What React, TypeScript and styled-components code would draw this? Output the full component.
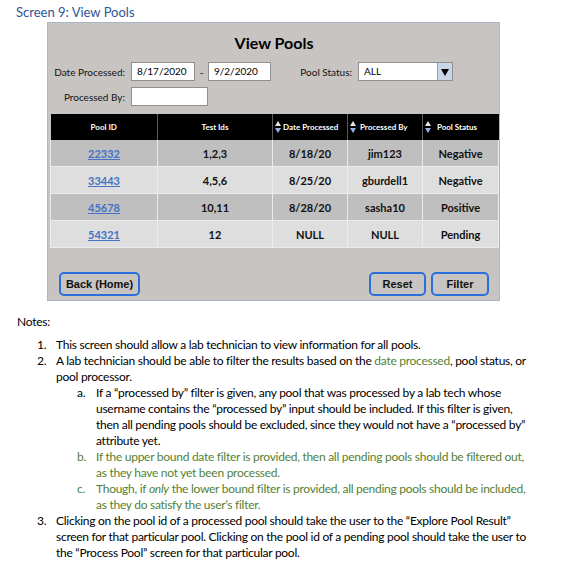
import React from "react";
import styled, { createGlobalStyle } from "styled-components";

const Global = createGlobalStyle`
  html, body { margin: 0; padding: 0; background: #ffffff; }
  body { font-family: Lato, "Noto Sans", sans-serif; color: #000; }
`;

const Page = styled.div`
  width: 578px;
  height: 583px;
  overflow: hidden;
  padding-top: 4px;
  box-sizing: border-box;
`;

const Heading = styled.h2`
  margin: 0 0 2px 16px;
  font-family: Lato, "Noto Sans", sans-serif;
  font-weight: 400;
  font-size: 13px;
  line-height: 16px;
  color: #2f5496;
`;

const Panel = styled.div`
  margin-left: 47px;
  width: 453px;
  height: 279px;
  box-sizing: border-box;
  background: #c8c4c2;
  border: 1px solid #a9b6ca;
  display: flex;
  flex-direction: column;
  padding: 10px 1px 0 2px;
  font-family: Lato, "Noto Sans", sans-serif;
`;

const PanelTitle = styled.div`
  text-align: center;
  font-weight: 700;
  font-size: 16px;
  line-height: 20px;
  height: 29px;
`;

const FormRow = styled.div<{ $top: number }>`
  display: flex;
  align-items: center;
  height: 19px;
  margin-top: ${(p) => p.$top}px;
`;

const Label = styled.span<{ $w: number }>`
  width: ${(p) => p.$w}px;
  text-align: right;
  font-size: 10px;
  color: #111;
  padding-right: 6px;
  box-sizing: border-box;
  flex: none;
`;

const Field = styled.div<{ $w: number }>`
  width: ${(p) => p.$w}px;
  height: 19px;
  box-sizing: border-box;
  background: #fff;
  border: 1px solid #8f8f8f;
  font-size: 10px;
  line-height: 17px;
  padding-left: 5px;
  flex: none;
  display: flex;
  justify-content: space-between;
`;

const Dash = styled.span`
  width: 13px;
  text-align: center;
  font-size: 10px;
  flex: none;
`;

const Arrow = styled.span`
  width: 14px;
  height: 17px;
  background: #c9d6e6;
  border-left: 1px solid #8da0ba;
  display: flex;
  align-items: center;
  justify-content: center;
`;

const Table = styled.table`
  margin-top: 8px;
  width: 448px;
  border-collapse: collapse;
  table-layout: fixed;
  font-family: Lato, "Noto Sans", sans-serif;
`;

const HeadCell = styled.th`
  height: 26px;
  padding: 0;
  background: #000;
  color: #fff;
  font-size: 8px;
  font-weight: 700;
  border-left: 1px solid #5a5a5a;
  text-align: center;
  white-space: nowrap;
  &:first-child { border-left: none; }
`;

const SortHead = styled.span`
  display: flex;
  align-items: center;
  gap: 2px;
  padding-left: 2px;
`;

const Row = styled.tr<{ $dark: boolean }>`
  background: ${(p) => (p.$dark ? "#bfbfbf" : "#dedede")};
`;

const Cell = styled.td`
  height: 26px;
  padding: 0;
  text-align: center;
  font-size: 11px;
  font-weight: 700;
  color: #111;
  border: 1px solid #ebebeb;
  border-top: none;
`;

const PoolLink = styled.a`
  color: #4472c4;
  text-decoration: underline;
  font-weight: 700;
`;

const ButtonRow = styled.div`
  margin-top: 24px;
  display: flex;
  align-items: center;
  padding: 0 9px 0 9px;
  gap: 5px;
`;

const Btn = styled.button<{ $w: number }>`
  width: ${(p) => p.$w}px;
  height: 24px;
  box-sizing: border-box;
  border: 2px solid #2a6fdb;
  border-radius: 5px;
  background: #c8c4c2;
  font-family: "Liberation Sans", Arial, sans-serif;
  font-weight: 700;
  font-size: 11px;
  color: #111;
  padding: 0;
`;

const Spacer = styled.div`
  flex: 1;
`;

const Notes = styled.div`
  margin-top: 13px;
  font-size: 12px;
  letter-spacing: -0.27px;
  line-height: 16px;
  font-family: Lato, "Noto Sans", sans-serif;
`;

const NotesLabel = styled.div`
  padding-left: 17px;
  margin-bottom: 7px;
`;

const List = styled.div<{ $indent: number }>`
  padding-left: ${(p) => p.$indent}px;
`;

const Item = styled.div<{ $green?: boolean; $mark: number }>`
  display: grid;
  grid-template-columns: ${(p) => p.$mark}px 1fr;
  color: ${(p) => (p.$green ? "#538135" : "#000")};
  white-space: nowrap;
`;

const Green = styled.span`
  color: #538135;
`;

const SortIcon = () => (
  <svg width="6" height="14" viewBox="0 0 6 14">
    <polygon points="3,1 6,6 0,6" fill="#e6e6e6" />
    <polygon points="0,8 6,8 3,13" fill="#8fb4e3" />
  </svg>
);

const rows = [
  { id: "22332", tests: "1,2,3", date: "8/18/20", by: "jim123", status: "Negative" },
  { id: "33443", tests: "4,5,6", date: "8/25/20", by: "gburdell1", status: "Negative" },
  { id: "45678", tests: "10,11", date: "8/28/20", by: "sasha10", status: "Positive" },
  { id: "54321", tests: "12", date: "NULL", by: "NULL", status: "Pending" },
];

export default function App() {
  return (
    <Page>
      <Global />
      <Heading>Screen 9: View Pools</Heading>
      <Panel>
        <PanelTitle>View Pools</PanelTitle>
        <FormRow $top={0}>
          <Label $w={81}>Date Processed:</Label>
          <Field $w={64}>8/17/2020</Field>
          <Dash>-</Dash>
          <Field $w={63}>9/2/2020</Field>
          <Label $w={87}>Pool Status:</Label>
          <Field $w={95}>
            ALL
            <Arrow>
              <svg width="8" height="8" viewBox="0 0 8 8">
                <polygon points="0,1 8,1 4,8" fill="#000" />
              </svg>
            </Arrow>
          </Field>
        </FormRow>
        <FormRow $top={6}>
          <Label $w={81}>Processed By:</Label>
          <Field $w={77} />
        </FormRow>
        <Table>
          <colgroup>
            <col style={{ width: 107 }} />
            <col style={{ width: 115 }} />
            <col style={{ width: 75 }} />
            <col style={{ width: 75 }} />
            <col style={{ width: 76 }} />
          </colgroup>
          <thead>
            <tr>
              <HeadCell>Pool ID</HeadCell>
              <HeadCell>Test Ids</HeadCell>
              <HeadCell>
                <SortHead>
                  <SortIcon />
                  Date Processed
                </SortHead>
              </HeadCell>
              <HeadCell>
                <SortHead>
                  <SortIcon />
                  &nbsp;Processed By
                </SortHead>
              </HeadCell>
              <HeadCell>
                <SortHead>
                  <SortIcon />
                  &nbsp;&nbsp;Pool Status
                </SortHead>
              </HeadCell>
            </tr>
          </thead>
          <tbody>
            {rows.map((r, i) => (
              <Row key={r.id} $dark={i % 2 === 0}>
                <Cell>
                  <PoolLink href="#">{r.id}</PoolLink>
                </Cell>
                <Cell>{r.tests}</Cell>
                <Cell>{r.date}</Cell>
                <Cell>{r.by}</Cell>
                <Cell>{r.status}</Cell>
              </Row>
            ))}
          </tbody>
        </Table>
        <ButtonRow>
          <Btn $w={81}>Back (Home)</Btn>
          <Spacer />
          <Btn $w={57}>Reset</Btn>
          <Btn $w={58}>Filter</Btn>
        </ButtonRow>
      </Panel>
      <Notes>
        <NotesLabel>Notes:</NotesLabel>
        <List $indent={37}>
          <Item $mark={19}>
            <span>1.</span>
            <span>This screen should allow a lab technician to view information for all pools.</span>
          </Item>
          <Item $mark={19}>
            <span>2.</span>
            <span>
              A lab technician should be able to filter the results based on the <Green>date processed</Green>, pool status, or
              <br />
              pool processor.
            </span>
          </Item>
          <List $indent={40}>
            <Item $mark={19}>
              <span>a.</span>
              <span>
                If a “processed by” filter is given, any pool that was processed by a lab tech whose
                <br />
                username contains the “processed by” input should be included. If this filter is given,
                <br />
                then all pending pools should be excluded, since they would not have a “processed by”
                <br />
                attribute yet.
              </span>
            </Item>
            <Item $mark={19} $green>
              <span>b.</span>
              <span>
                If the upper bound date filter is provided, then all pending pools should be filtered out,
                <br />
                as they have not yet been processed.
              </span>
            </Item>
            <Item $mark={19} $green>
              <span>c.</span>
              <span>
                Though, if <em>only</em> the lower bound filter is provided, all pending pools should be included,
                <br />
                as they do satisfy the user’s filter.
              </span>
            </Item>
          </List>
          <Item $mark={19}>
            <span>3.</span>
            <span>
              Clicking on the pool id of a processed pool should take the user to the “Explore Pool Result”
              <br />
              screen for that particular pool. Clicking on the pool id of a pending pool should take the user to
              <br />
              the “Process Pool” screen for that particular pool.
            </span>
          </Item>
        </List>
      </Notes>
    </Page>
  );
}
